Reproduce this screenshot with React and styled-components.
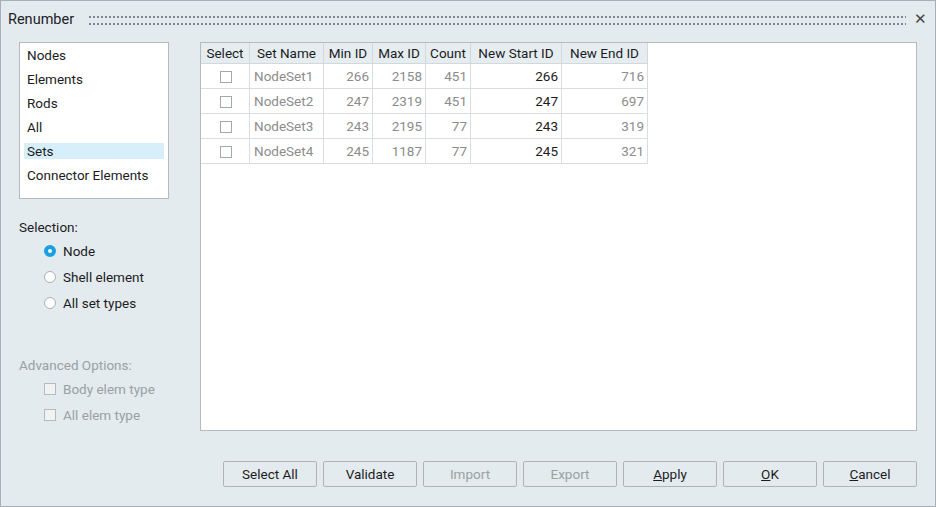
import styled, { createGlobalStyle } from 'styled-components';

const Global = createGlobalStyle`
  html, body { margin: 0; padding: 0; background: #e4ebee; }
  body { font-family: Roboto, "Liberation Sans", sans-serif; font-size: 13.5px; color: #1c1c24; }
`;

const Window = styled.div`
  width: 936px;
  height: 507px;
  box-sizing: border-box;
  border: 1px solid #a9b0b5;
  background: #e4ebee;
  display: flex;
  flex-direction: column;
`;

const TitleBar = styled.div`
  height: 37px;
  display: flex;
  align-items: center;
  padding: 0 8px 0 7px;
  gap: 15px;
`;

const Title = styled.span`
  font-size: 14.5px;
  color: #202028;
`;

const Grip = styled.div`
  flex: 1;
  height: 9px;
  background-image: radial-gradient(circle at 1px 1px, #7f878c 1px, transparent 1.3px);
  background-size: 4px 7px;
  margin-top: 1px;
`;

const Close = styled.span`
  font-size: 15px;
  color: #444;
  line-height: 1;
  margin-left: -7px;
`;

const Body = styled.div`
  flex: 1;
  display: flex;
  padding: 4px 18px 0 18px;
  gap: 31px;
`;

const Side = styled.div`
  width: 150px;
  display: flex;
  flex-direction: column;
`;

const List = styled.div`
  height: 157px;
  background: #fff;
  border: 1px solid #b5babd;
  box-sizing: border-box;
  padding: 0 4px;
  display: flex;
  flex-direction: column;
`;

const ListItem = styled.div`
  height: 24px;
  line-height: 24px;
  padding-left: 3px;
  background: ${p => (p.$active ? '#d6effb' : 'transparent')};
  ${p => p.$active && 'height: 16px; line-height: 16px; margin: 4px 0;'}
`;

const SectionLabel = styled.div`
  margin-top: ${p => p.$top}px;
  color: ${p => (p.$muted ? '#9aa0a4' : '#1c1c24')};
`;

const OptionRow = styled.label`
  display: flex;
  align-items: center;
  gap: 7px;
  height: 26px;
  padding-left: 25px;
  color: ${p => (p.$muted ? '#9aa0a4' : '#1c1c24')};
`;

const Radio = styled.span`
  width: 12px;
  height: 12px;
  border-radius: 50%;
  box-sizing: border-box;
  background: #fff;
  border: ${p => (p.$checked ? '4px solid #1a9fe0' : '1px solid #a8aeb2')};
`;

const Check = styled.span`
  width: 12px;
  height: 12px;
  box-sizing: border-box;
  border: 1px solid ${p => (p.$muted ? '#b4bcc1' : '#a3a8ac')};
  background: ${p => (p.$muted ? '#f2f2f2' : '#fff')};
`;

const Options = styled.div`
  margin-top: ${p => p.$top ?? 4}px;
  display: flex;
  flex-direction: column;
`;

const TableBox = styled.div`
  flex: 1;
  height: 389px;
  background: #fff;
  border: 1px solid #b5babd;
  box-sizing: border-box;
`;

const Table = styled.table`
  border-collapse: collapse;
  font-size: 13.5px;
`;

const Th = styled.th`
  height: 20px;
  font-weight: normal;
  background: #e6edf0;
  border-right: 1px solid #d3d8db;
  border-bottom: 1px solid #d3d8db;
  padding: 0 4px;
  white-space: nowrap;
  color: #1c1c24;
  width: ${p => p.$w}px;
`;

const Td = styled.td`
  height: 24px;
  border-right: 1px solid #d9dde0;
  border-bottom: 1px solid #d9dde0;
  padding: 0 3px 0 4px;
  text-align: ${p => p.$align || 'right'};
  color: ${p => (p.$dark ? '#1c1c24' : '#8c8c8c')};
`;

const CellCheck = styled.span`
  display: inline-block;
  width: 12px;
  height: 12px;
  box-sizing: border-box;
  border: 1px solid #a3a8ac;
  background: #fff;
  vertical-align: middle;
`;

const Footer = styled.div`
  display: flex;
  justify-content: flex-end;
  gap: 6px;
  padding: 0 18px 19px 0;
`;

const Button = styled.button`
  width: 94px;
  height: 26px;
  border: 1px solid #aeb3b6;
  border-radius: 2px;
  background: #e4ebee;
  font-family: inherit;
  font-size: 13.5px;
  color: ${p => (p.disabled ? '#9aa0a4' : '#1c1c24')};
  padding: 0;
  u { text-decoration: underline; }
`;

const rows = [
  ['NodeSet1', 266, 2158, 451, 266, 716],
  ['NodeSet2', 247, 2319, 451, 247, 697],
  ['NodeSet3', 243, 2195, 77, 243, 319],
  ['NodeSet4', 245, 1187, 77, 245, 321],
];

const cols = [
  ['Select', 40],
  ['Set Name', 65],
  ['Min ID', 40],
  ['Max ID', 44],
  ['Count', 36],
  ['New Start ID', 82],
  ['New End ID', 77],
];

export default function App() {
  return (
    <>
      <Global />
      <Window>
        <TitleBar>
          <Title>Renumber</Title>
          <Grip />
          <Close>✕</Close>
        </TitleBar>
        <Body>
          <Side>
            <List>
              {['Nodes', 'Elements', 'Rods', 'All', 'Sets', 'Connector Elements'].map(t => (
                <ListItem key={t} $active={t === 'Sets'}>{t}</ListItem>
              ))}
            </List>
            <SectionLabel $top={20}>Selection:</SectionLabel>
            <Options $top={3}>
              <OptionRow><Radio $checked />Node</OptionRow>
              <OptionRow><Radio />Shell element</OptionRow>
              <OptionRow><Radio />All set types</OptionRow>
            </Options>
            <SectionLabel $top={41} $muted>Advanced Options:</SectionLabel>
            <Options $top={3}>
              <OptionRow $muted><Check $muted />Body elem type</OptionRow>
              <OptionRow $muted><Check $muted />All elem type</OptionRow>
            </Options>
          </Side>
          <TableBox>
            <Table>
              <thead>
                <tr>
                  {cols.map(([c, w]) => <Th key={c} $w={w}>{c}</Th>)}
                </tr>
              </thead>
              <tbody>
                {rows.map(r => (
                  <tr key={r[0]}>
                    <Td $align="center"><CellCheck /></Td>
                    <Td $align="left">{r[0]}</Td>
                    <Td>{r[1]}</Td>
                    <Td>{r[2]}</Td>
                    <Td>{r[3]}</Td>
                    <Td $dark>{r[4]}</Td>
                    <Td>{r[5]}</Td>
                  </tr>
                ))}
              </tbody>
            </Table>
          </TableBox>
        </Body>
        <Footer>
          <Button>Select All</Button>
          <Button>Validate</Button>
          <Button disabled>Import</Button>
          <Button disabled>Export</Button>
          <Button><u>A</u>pply</Button>
          <Button><u>O</u>K</Button>
          <Button><u>C</u>ancel</Button>
        </Footer>
      </Window>
    </>
  );
}
